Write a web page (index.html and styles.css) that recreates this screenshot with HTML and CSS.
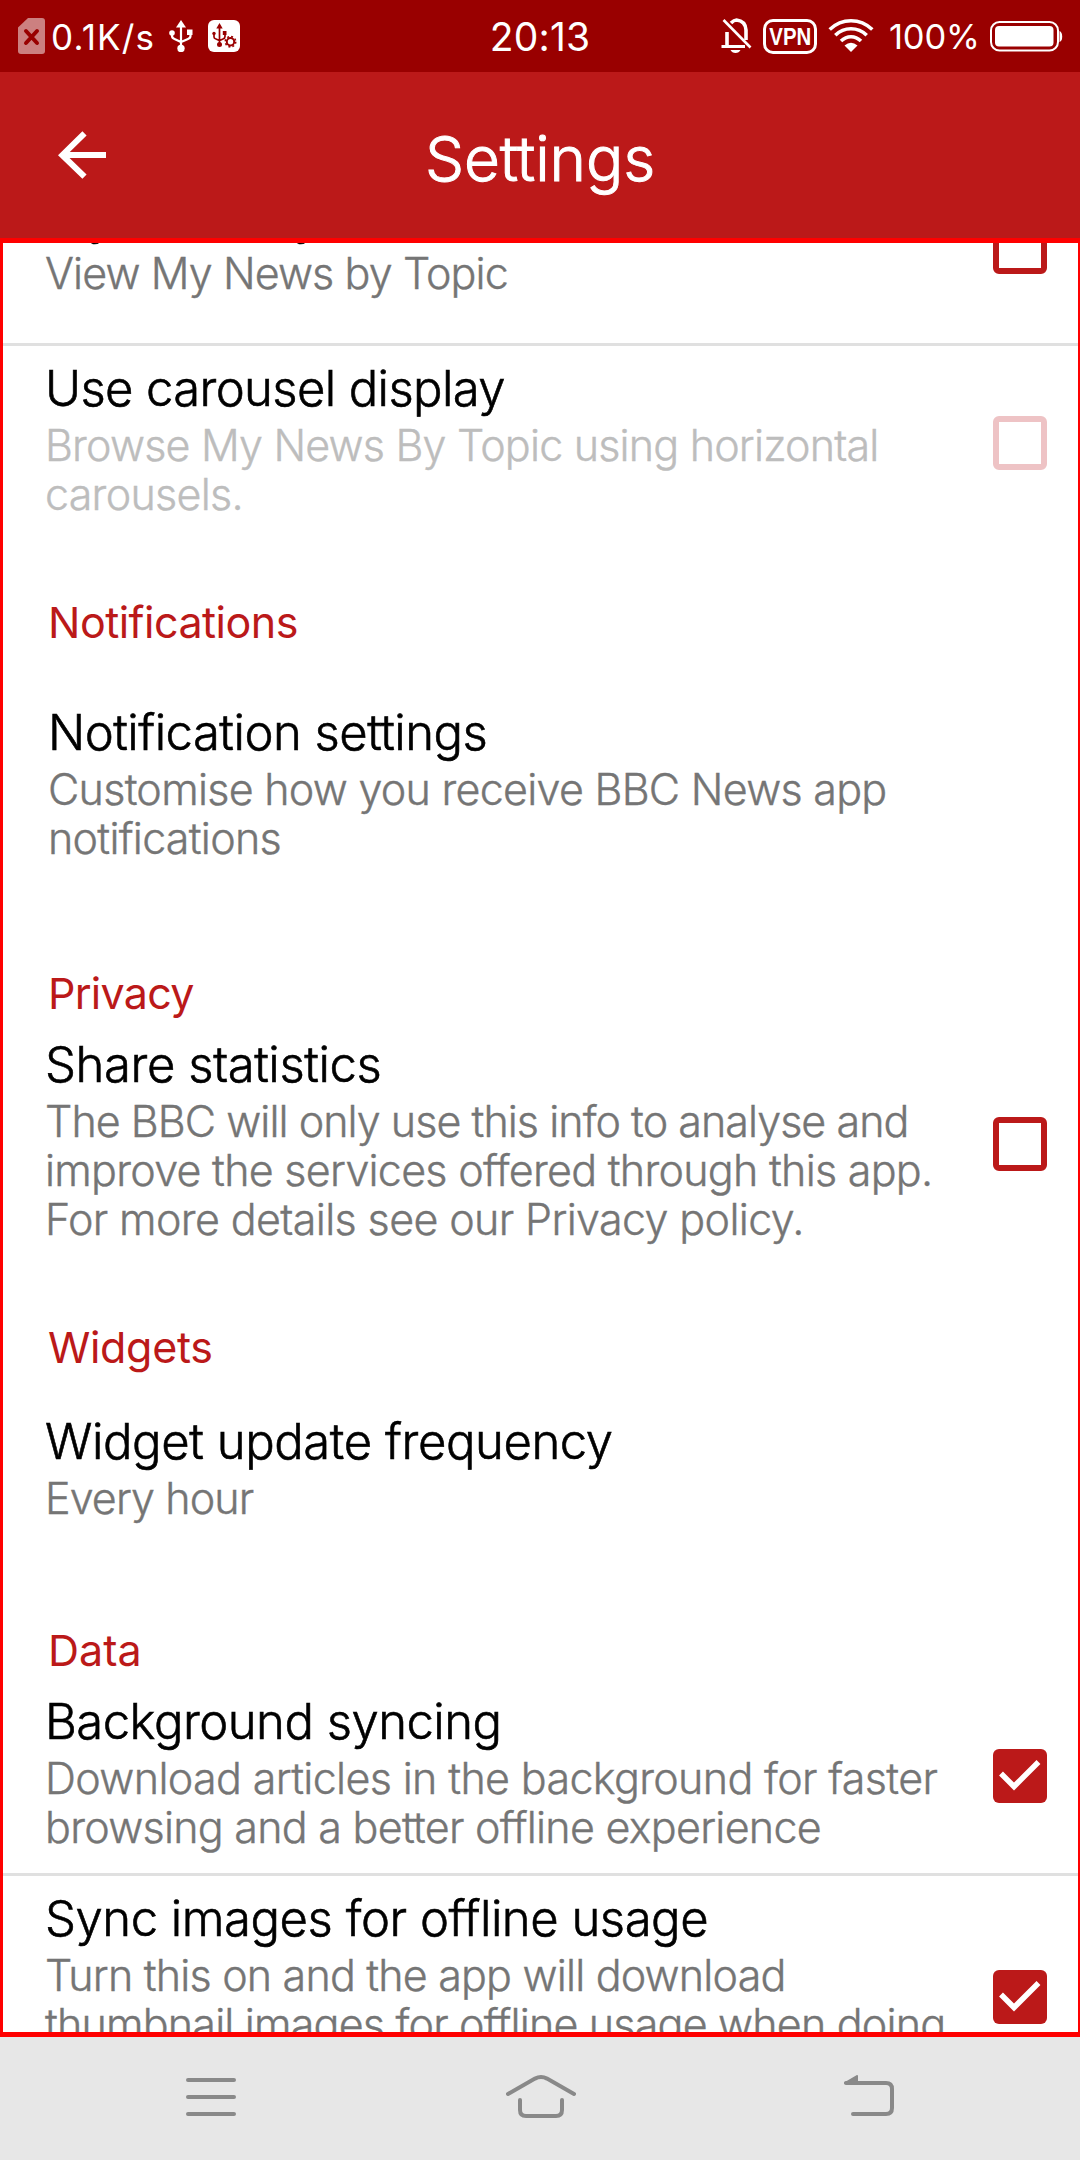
FILE: index.html
```html
<!DOCTYPE html>
<html lang="en">
<head>
<meta charset="utf-8">
<title>Settings</title>
<link rel="stylesheet" href="styles.css">
</head>
<body>
<div class="screen">
  <div class="status">
    <div class="status-left">
      <svg class="sim" width="27" height="36" viewBox="0 0 27 36"><path d="M10 0H24Q27 0 27 3V33Q27 36 24 36H3Q0 36 0 33V9.500Z" fill="#cc8080"/><path d="M8 13L19 25M19 13L8 25" stroke="#900" stroke-width="4" stroke-linecap="round"/></svg>
      <span class="speed">0.1K/s</span>
      <svg class="usb" width="24" height="32" viewBox="0 0 24 32" fill="none" stroke="#fff" stroke-width="2.200"><path d="M12 6V28M3 14V16Q3 18 5.500 19L12 22L19 19Q21.500 18 21.500 16V14"/><path d="M12 0L17 7.500H7Z" fill="#fff" stroke="none"/><circle cx="12" cy="28.500" r="3.700" fill="#fff" stroke="none"/><circle cx="3" cy="13" r="2.800" fill="#fff" stroke="none"/><rect x="18" y="9.500" width="5.500" height="5.500" fill="#fff" stroke="none"/></svg>
      <svg class="usb-gear" width="32" height="32" viewBox="0 0 32 32"><rect width="32" height="32" rx="6" fill="#fff"/><g fill="none" stroke="#900" stroke-width="1.700"><path d="M11.500 7V24M6 14V17Q6 18.500 8 19L11.500 20.500L15 19Q17 18.500 17 16.500V13"/><circle cx="22.500" cy="21.700" r="3.700" stroke-width="2"/><circle cx="22.500" cy="21.700" r="5.200" stroke-width="1.600" stroke-dasharray="2 2.084"/></g><g fill="#900"><path d="M11.500 3L14.700 8.500H8.300Z"/><circle cx="11.500" cy="24.500" r="2.500"/><circle cx="6" cy="13.500" r="1.700"/><rect x="14.800" y="11" width="3.700" height="4"/></g></svg>
    </div>
    <span class="time">20:13</span>
    <div class="status-right">
      <svg class="bell" width="31" height="35" viewBox="0 0 31 35" fill="none" stroke="#fff"><path d="M6 29V14M10 5Q13 2 15.500 2Q24.500 3 25 12V22" stroke-width="3.600"/><path d="M0.500 28.500H24" stroke-width="3"/><path d="M2.500 2L29.500 29.500" stroke-width="2.600"/><path d="M9.500 32H19.500Q18 35 14.500 35T9.500 32Z" fill="#fff" stroke="none"/></svg>
      <svg class="vpn" width="54" height="35" viewBox="0 0 54 35"><rect x="1.500" y="1.500" width="51" height="32" rx="8.500" fill="none" stroke="#fff" stroke-width="3"/><text x="27.300" y="26" text-anchor="middle" textLength="42" lengthAdjust="spacingAndGlyphs" class="vpn-text">VPN</text></svg>
      <svg class="wifi" width="46" height="33" viewBox="0 0 46 33" fill="none" stroke="#fff" stroke-width="3.600"><path d="M1.700 10.500Q11 1.800 23 1.800T44.300 10.500M7.300 16.300Q14 9.800 23 9.800T38.700 16.300M13 22Q17.500 17.700 23 17.700T33 22"/><path d="M16.500 26.500Q23 21 29.500 26.500L23 33Z" fill="#fff" stroke="none"/></svg>
      <span class="percent">100%</span>
      <svg class="battery" width="73" height="31" viewBox="0 0 73 31"><rect x="1" y="1" width="67" height="28.500" rx="8.500" fill="none" stroke="#fff" stroke-width="2"/><rect x="5" y="5" width="58.500" height="20.500" rx="4" fill="#fff"/><path d="M69.500 10Q72.200 11 72.200 15.500T69.500 21Z" fill="#fff"/></svg>
    </div>
  </div>
  <header class="appbar">
    <svg class="back" width="50" height="50" viewBox="0 0 50 50" fill="none" stroke="#fff" stroke-width="6"><path d="M48 25H5M26.500 3.300L4.300 25.200L26.500 46.700"/></svg>
    <h1 class="title">Settings</h1>
  </header>
  <main class="frame">
    <div class="list">
      <div class="row first">
        <div class="text"><div class="name k9">My News by</div>
        <div class="summary"><span class="k9">View My News by Topic</span></div></div>
        <span class="check"></span>
      </div>
      <div class="row divided disabled">
        <div class="text"><div class="name k6">Use carousel display</div>
        <div class="summary"><span class="k8">Browse My News By Topic using horizontal</span><br><span class="k7">carousels.</span></div></div>
        <span class="check"></span>
      </div>
      <h2 class="heading notif k5">Notifications</h2>
      <div class="row inset">
        <div class="text"><div class="name k5">Notification settings</div>
        <div class="summary"><span class="k7">Customise how you receive BBC News app</span><br><span class="k7">notifications</span></div></div>
      </div>
      <h2 class="heading privacy k7">Privacy</h2>
      <div class="row">
        <div class="text"><div class="name k4">Share statistics</div>
        <div class="summary"><span class="k10">The BBC will only use this info to analyse and</span><br><span class="k7">improve the services offered through this app.</span><br><span class="k6">For more details see our Privacy policy.</span></div></div>
        <span class="check"></span>
      </div>
      <h2 class="heading widgets k3">Widgets</h2>
      <div class="row widget">
        <div class="text"><div class="name k4">Widget update frequency</div>
        <div class="summary"><span class="k9">Every hour</span></div></div>
      </div>
      <h2 class="heading data">Data</h2>
      <div class="row">
        <div class="text"><div class="name k5">Background syncing</div>
        <div class="summary"><span class="k65">Download articles in the background for faster</span><br><span class="k7">browsing and a better offline experience</span></div></div>
        <span class="check on"><svg width="54" height="54" viewBox="0 0 54 54"><path d="M8 24.500L21 37.500L45.500 13" fill="none" stroke="#fff" stroke-width="5.500"/></svg></span>
      </div>
      <div class="row divided last">
        <div class="text"><div class="name k45">Sync images for offline usage</div>
        <div class="summary"><span class="k8">Turn this on and the app will download</span><br><span class="k8">thumbnail images for offline usage when doing</span><br><span class="k7">a background sync</span></div></div>
        <span class="check on"><svg width="54" height="54" viewBox="0 0 54 54"><path d="M8 24.500L21 37.500L45.500 13" fill="none" stroke="#fff" stroke-width="5.500"/></svg></span>
      </div>
    </div>
  </main>
  <nav class="nav">
    <svg width="50" height="44" viewBox="0 0 50 44" fill="none" stroke="#898989" stroke-width="4" stroke-linecap="round"><path d="M2 5H48M2 22H48M2 39H48"/></svg>
    <svg class="home" width="70" height="44" viewBox="0 0 70 44" fill="none" stroke="#898989" stroke-width="4" stroke-linecap="round"><path d="M2 19L29 3.600Q35 0.600 41 3.600L68 19M14 25V35Q14 41 20 41H50Q56 41 56 35V25"/></svg>
    <svg class="return" width="52" height="42" viewBox="0 0 52 42" fill="none" stroke="#898989" stroke-width="4" stroke-linecap="round"><path d="M3 8H43Q49 8 49 14V33Q49 39 43 39H10"/><path d="M14 1V8H2Z" fill="#898989" stroke-width="2" stroke-linejoin="round"/></svg>
  </nav>
</div>
</body>
</html>
```
FILE: styles.css
```css
* { box-sizing: border-box; }
body { margin: 0; background: #fff; font-family: Inter, "Liberation Sans", sans-serif; }
svg { display: block; flex: none; }
.screen { width: 1080px; height: 2160px; display: flex; flex-direction: column; overflow: hidden; }

/* Status bar */
.status { height: 72px; background: #900; color: #fff; display: grid; grid-template-columns: 1fr auto 1fr; line-height: 74px; white-space: nowrap; }
.status-left, .status-right { display: flex; align-items: flex-start; }
.status-left { padding-left: 18px; }
.status-right { justify-content: flex-end; padding-right: 17px; }
.sim { margin-top: 18px; }
.speed { font-size: 35px; letter-spacing: 1.2px; margin-left: 6px; width: 103px; }
.usb { margin: 20px 0 0 15px; }
.usb-gear { margin: 20px 0 0 15px; }
.time { font-size: 39px; letter-spacing: 0.2px; }
.bell { margin-top: 18px; }
.vpn { margin: 19px 0 0 11px; }
.vpn-text { font: 700 24px "Liberation Sans", Arial, sans-serif; fill: #fff; }
.wifi { margin: 19px 0 0 11px; }
.percent { font-size: 34.500px; letter-spacing: -0.2px; margin-left: 15px; width: 90px; }
.battery { margin: 21px 0 0 11px; }

/* App bar */
.appbar { height: 166px; background: #bb1919; color: #fff; display: grid; grid-template-columns: 200px 1fr 200px; }
.back { margin: 58px 0 0 58px; }
.title { margin: 0; text-align: center; font-size: 62px; font-weight: 300; line-height: 173px; letter-spacing: -0.1px; -webkit-text-stroke: 1px #fff; }

/* Settings list */
.frame { height: 1799px; border: solid #f00; border-width: 5px 2px 5px 3px; overflow: hidden; }
.list { margin-top: -93px; }
.row { display: flex; align-items: center; padding: 11px 31px 21px 42px; }
.row.first { padding-top: 35px; padding-bottom: 45px; }
.row.divided { border-top: 3px solid #e0e0e0; }
.row.inset { padding: 50px 31px 0 45px; }
.row.widget { padding: 34px 31px 0 42px; }
.text { flex: 1; white-space: nowrap; }
.name { font-size: 49px; font-weight: 300; line-height: 64px; color: #000; -webkit-text-stroke: 0.6px; }
.summary { font-size: 43px; font-weight: 300; line-height: 49px; color: #757575; -webkit-text-stroke: 0.4px; }
.disabled .summary { color: #bdbdbd; }
.heading { margin: 0 0 0 45px; font-size: 43px; font-weight: 400; line-height: 58px; color: #bb1919; }
.heading.notif { margin-top: 53px; }
.heading.privacy { margin-top: 101px; }
.heading.widgets { margin-top: 53px; }
.heading.data { margin-top: 98px; }
.check { width: 54px; height: 54px; margin-top: 10px; border: 6px solid #bb1919; border-radius: 6px; flex: none; }
.disabled .check { border-color: #eec3c5; }
.check.on { border: 0; background: #bb1919; }
.last .check { margin-top: 8px; }

/* Tracking steps */
.k3 { letter-spacing: -0.33px; }
.k4 { letter-spacing: -0.41px; }
.k45 { letter-spacing: -0.47px; }
.k5 { letter-spacing: -0.51px; }
.k6 { letter-spacing: -0.63px; }
.k65 { letter-spacing: -0.65px; }
.k7 { letter-spacing: -0.73px; }
.k8 { letter-spacing: -0.81px; }
.k9 { letter-spacing: -0.9px; }
.k10 { letter-spacing: -0.96px; }

/* Navigation bar */
.nav { height: 123px; background: #e7e7e7; display: flex; align-items: flex-start; padding: 38px 0 0 186px; }
.home { margin-left: 270px; }
.return { margin-left: 267px; }
```
